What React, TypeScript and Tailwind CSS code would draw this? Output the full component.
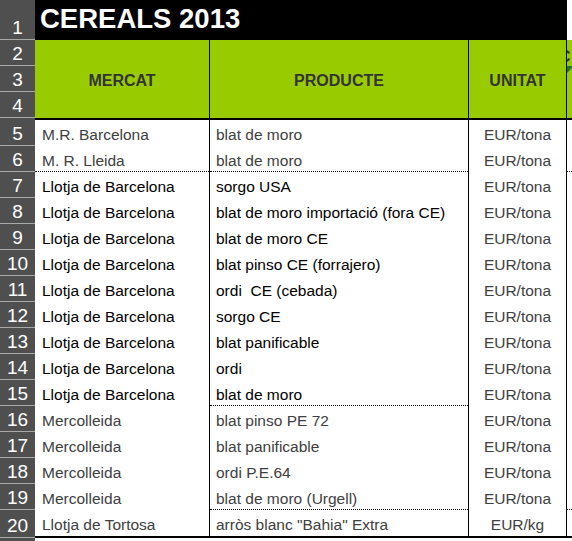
import React from 'react';

type Row = {
    n: number;
    mercat: string;
    producte: string;
    unitat: string;
};

const rows: Row[] = [
    { n: 5, mercat: "M.R. Barcelona", producte: "blat de moro", unitat: "EUR/tona" },
    { n: 6, mercat: "M. R. Lleida", producte: "blat de moro", unitat: "EUR/tona" },
    { n: 7, mercat: "Llotja de Barcelona", producte: "sorgo USA", unitat: "EUR/tona" },
    { n: 8, mercat: "Llotja de Barcelona", producte: "blat de moro importació (fora CE)", unitat: "EUR/tona" },
    { n: 9, mercat: "Llotja de Barcelona", producte: "blat de moro CE", unitat: "EUR/tona" },
    { n: 10, mercat: "Llotja de Barcelona", producte: "blat pinso CE (forrajero)", unitat: "EUR/tona" },
    { n: 11, mercat: "Llotja de Barcelona", producte: "ordi  CE (cebada)", unitat: "EUR/tona" },
    { n: 12, mercat: "Llotja de Barcelona", producte: "sorgo CE", unitat: "EUR/tona" },
    { n: 13, mercat: "Llotja de Barcelona", producte: "blat panificable", unitat: "EUR/tona" },
    { n: 14, mercat: "Llotja de Barcelona", producte: "ordi", unitat: "EUR/tona" },
    { n: 15, mercat: "Llotja de Barcelona", producte: "blat de moro", unitat: "EUR/tona" },
    { n: 16, mercat: "Mercolleida", producte: "blat pinso PE 72", unitat: "EUR/tona" },
    { n: 17, mercat: "Mercolleida", producte: "blat panificable", unitat: "EUR/tona" },
    { n: 18, mercat: "Mercolleida", producte: "ordi P.E.64", unitat: "EUR/tona" },
    { n: 19, mercat: "Mercolleida", producte: "blat de moro (Urgell)", unitat: "EUR/tona" },
    { n: 20, mercat: "Llotja de Tortosa", producte: "arròs blanc \"Bahia\" Extra", unitat: "EUR/kg" },
];

// which cells carry a dotted bottom border
const dotA = [6];
const dotB = [6, 15, 19];
const dotD = [6, 19];

const RowNum = ({ n, h }: { n?: number; h: string }) => (
    <div className={`w-[35px] shrink-0 bg-[#4f4f4f] border-b border-[#a9a9a9] flex items-end justify-center pb-[1px] text-white text-[19px] leading-[20px] ${h}`}>
        {n}
    </div>
);

const Divider = () => <div className="w-px shrink-0 bg-black" />;

const DataRow = ({ row }: { row: Row }) => {
    const strong = row.n >= 7 && row.n <= 15;
    const h = row.n === 5 || row.n === 20 ? "h-[28px]" : "h-[26px]";
    const edge = row.n === 5 ? "border-t-2 border-black" : row.n === 20 ? "border-b-2 border-black" : "";
    const tone = strong ? "text-black" : "text-[#404040]";

    return (
        <div className={`flex ${h}`}>
            <RowNum n={row.n} h={h} />
            <div className={`flex flex-1 bg-white ${edge}`}>
                <div className={`w-[174px] shrink-0 flex items-end pl-[7px] whitespace-pre ${tone} ${dotA.includes(row.n) ? "border-b border-dotted border-black pb-[1px]" : "pb-[2px]"}`}>
                    {row.mercat}
                </div>
                <Divider />
                <div className={`w-[258px] shrink-0 flex items-end pl-[6px] whitespace-pre ${tone} ${dotB.includes(row.n) ? "border-b border-dotted border-black pb-[1px]" : "pb-[2px]"}`}>
                    {row.producte}
                </div>
                <Divider />
                <div className="w-[97px] shrink-0 flex items-end justify-center pb-[2px] text-[#404040]">
                    {row.unitat}
                </div>
                <Divider />
                <div className={`flex-1 ${dotD.includes(row.n) ? "border-b border-dotted border-black" : ""}`} />
            </div>
        </div>
    );
};

export default function App() {
    return (
        <div className="w-[572px] h-[541px] overflow-hidden bg-white font-['Liberation_Sans',Arial,sans-serif] text-[15.5px] leading-[18px]">
            {/* Title row */}
            <div className="flex h-[40px]">
                <RowNum n={1} h="h-[40px]" />
                <div className="w-[532px] shrink-0 bg-black flex items-end pl-[5px] pb-[6px] text-white font-bold text-[27.5px] leading-[30px]">
                    CEREALS 2013
                </div>
                <div className="flex-1 bg-white" />
            </div>

            {/* Header rows 2-4 */}
            <div className="flex h-[78px]">
                <div className="flex flex-col">
                    <RowNum n={2} h="h-[26px]" />
                    <RowNum n={3} h="h-[26px]" />
                    <RowNum n={4} h="h-[26px]" />
                </div>
                <div className="flex flex-1 bg-[#99cc00] text-[#333333] font-bold text-[16px] leading-[18px]">
                    <div className="w-[174px] shrink-0 flex items-center justify-center pt-[3px]">MERCAT</div>
                    <Divider />
                    <div className="w-[258px] shrink-0 flex items-center justify-center pt-[3px]">PRODUCTE</div>
                    <Divider />
                    <div className="w-[97px] shrink-0 flex items-center justify-center pt-[3px]">UNITAT</div>
                    <Divider />
                    <div className="relative flex-1 overflow-hidden">
                        <span className="absolute left-[0px] top-[42px] -translate-x-[8px] -translate-y-[34px]">C</span>
                        <svg className="absolute left-0 top-[26px]" width="7" height="7" viewBox="0 0 7 7">
                            <polygon points="0,0 7,0 0,7" fill="#1d7a1d" />
                        </svg>
                    </div>
                </div>
            </div>

            {/* Data rows */}
            {rows.map((row) => (
                <DataRow key={row.n} row={row} />
            ))}

            {/* Row 21, only its top edge shows */}
            <div className="flex h-[26px]">
                <RowNum h="h-[26px]" />
                <div className="flex-1 bg-white" />
            </div>
        </div>
    );
}
